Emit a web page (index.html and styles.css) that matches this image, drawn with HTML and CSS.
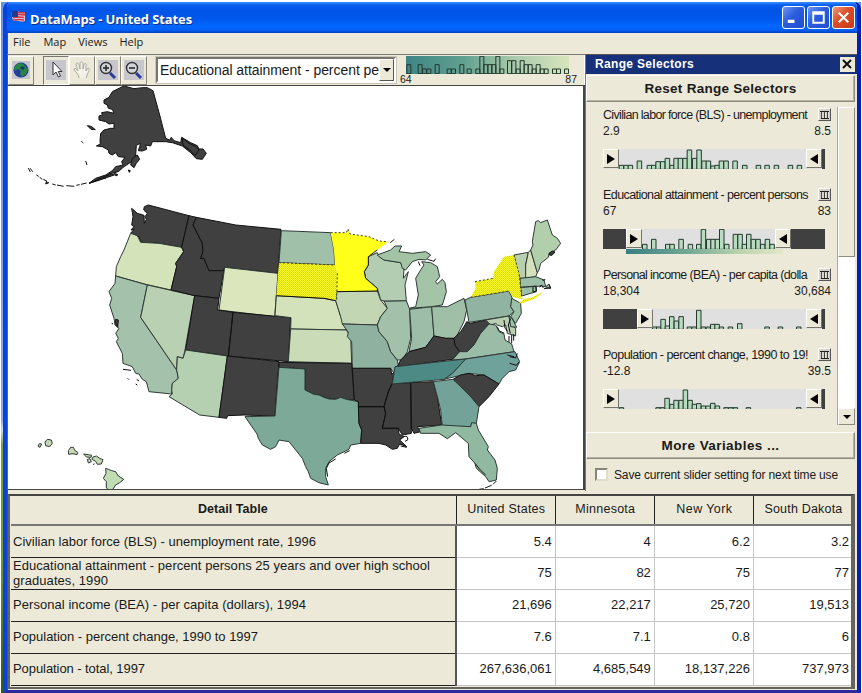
FILE: index.html
```html
<!DOCTYPE html>
<html lang="en">
<head>
<meta charset="utf-8">
<title>DataMaps - United States</title>
<link rel="stylesheet" href="styles.css">
</head>
<body>
<div class="window">
<header class="titlebar">
  <svg class="flag" width="17" height="14" viewBox="0 0 17 14"><path fill="#e9c6cf" d="M1 2q5-2 9 0 3 1 5 0v9q-3 1-6 0t-6 0z"/><path d="M3 3q5-1 12 0M4 5q5-1 11 0M3 7.500q6-1 11 0M3 10q6-1 11 0" fill="none" stroke="#d0364a" stroke-width="1.300"/><path fill="#263a91" d="M1 1h7v6H2z"/></svg>
  <h1><span class="fit" data-w="162">DataMaps - United States</span></h1>
  <div class="controls">
    <b class="min"><svg viewBox="0 0 22 22"><path d="M5 15h7" stroke="#fff" stroke-width="3.500"/></svg></b>
    <b class="max"><svg viewBox="0 0 22 22"><path d="M5.500 5.500h11v11h-11zM5 7h12" fill="none" stroke="#fff" stroke-width="2"/></svg></b>
    <b class="close"><svg viewBox="0 0 22 22"><path d="M6 6l10 10M16 6L6 16" stroke="#fff" stroke-width="2.200"/></svg></b>
  </div>
</header>
<nav class="menu"><span>File</span><span>Map</span><span>Views</span><span>Help</span></nav>
<div class="upper">
  <section class="left">
    <div class="toolbar">
      <button class="tool globe"><svg width="18" height="18" viewBox="0 0 18 18"><path fill="#c4c4cc" d="M0 0h18v18H0z"/><circle cx="9" cy="9" r="7.500" fill="#233d9a"/><path fill="#278642" d="M5 3l5-1 3 3 3 3-2 5-4 3-2-3 1-3-3-2-3 2-1-3z"/><path fill="#173465" d="M10 5l3 2-2 2-3-2z"/></svg></button>
      <button class="tool pressed"><svg width="20" height="20" viewBox="0 0 20 20"><path fill="#c6c6cc" d="M0 0h20v20H0z"/><path d="M7 2v13l3-3 2.500 5 2-1-2.300-4.500H16z" fill="#fff" stroke="#333"/></svg></button>
      <button class="tool"><svg width="20" height="20" viewBox="0 0 20 20"><path d="M7 18c0-4-4-6-5-9 1-2 3 1 4 2L4 4c1-2 2-1 3 1l1 4V3c1-2 2-1 3 0v6l1-5c2-1 3 0 2 2v5l2-3c2 0 1 3 0 5l-2 5" fill="#f3f2e9" stroke="#a9a99e"/></svg></button>
      <button class="tool"><svg width="20" height="20" viewBox="0 0 20 20"><path fill="#c6c6cc" d="M0 0h20v20H0z"/><path d="M12 13l5 5" stroke="#2b3b9b" stroke-width="3"/><circle cx="8" cy="8" r="5.500" fill="#d3d3dc" stroke="#333" stroke-width="1.400"/><path d="M5 8h6M8 5v6" stroke="#222" stroke-width="1.500"/></svg></button>
      <button class="tool"><svg width="20" height="20" viewBox="0 0 20 20"><path fill="#c6c6cc" d="M0 0h20v20H0z"/><path d="M12 13l5 5" stroke="#2b3b9b" stroke-width="3"/><circle cx="8" cy="8" r="5.500" fill="#d3d3dc" stroke="#333" stroke-width="1.400"/><path d="M5 8h6" stroke="#222" stroke-width="1.500"/></svg></button>
      <div class="combo"><span class="fit" data-w="219">Educational attainment - percent pe</span><i class="drop"></i></div>
      <div class="legend">
        <svg class="bars" width="163" height="18" viewBox="0 0 488 54" data-base="52" data-w="12" data-bars="2,27 36,27 49,14 62,14 87,27 123,14 136,14 161,27 183,14 209,14 221,52 233,27 245,27 257,27 269,52 281,14 304,39 317,39 330,14 342,39 354,27 366,27 378,14 390,27 402,14 414,14 439,14 451,14 475,14"></svg>
        <div class="ends"><span>64</span><span>87</span></div>
      </div>
    </div>
    <div class="map">
<svg width="575" height="403" viewBox="9 86 575 403">
<defs><pattern id="dots" width="6" height="6" patternUnits="userSpaceOnUse"><rect width="6" height="6" fill="#f8f81a"/><rect width="3" height="3" fill="#cfcf2e"/><rect x="3" y="3" width="3" height="3" fill="#e4e41e"/></pattern></defs>
<g transform="scale(.33333)">
<path class="x" d="M375 258L405 266 430 263 445 263 462 272 482 345 500 415 512 420 517 412 525 422 545 428 548 412 575 428 595 437 600 447 612 447 622 460 610 478 592 476 575 458 550 438 520 428 500 425 460 425 455 438 440 435 443 448 430 453 418 452 425 430 412 436 410 465 405 480 375 500 358 515 330 522 320 535 300 537 270 550 290 535 320 525 340 512 350 500 372 495 368 485 378 472 358 470 350 458 340 465 330 460 328 450 310 440 292 438 304 432 303 422 305 400 315 390 335 385 345 385 345 370 330 372 320 365 300 360 300 348 310 345 308 338 325 335 345 340 340 328 328 325 325 315 315 310 315 300 330 292 340 275 350 270 360 265Z"/>
<path class="x" d="M400 475L415 465 422 478 412 490 405 503 395 495ZM388 510l6 2-3 5ZM265 377l12 2 12 10-13-1ZM247 424l6 5M260 483l4 12M88 504l6 12M94 505l7 10M112 525l7 4M122 532l8 6M133 538l10 5-3 9 10-4M160 552l10 3M174 555l20 4M202 557l24 2M232 556l10-2M246 553l17-4"/>
<path class="x" d="M270 550l22-8 24-12 22-8 8 3-24 8-22 8ZM345 520l12 4-6 4ZM550 414l20 16 22 10 8 10-12 16-16-16-20-14Z"/>
</g>
<g transform="translate(110 190) scale(.33333)">
<path class="x" d="M68 55L85 70 105 76 106 100 112 88 108 80 115 70 104 60 106 50 118 45 240 77 218 172 150 160 95 157 90 140 65 130 75 118 66 120 75 110 68 105 72 80Z"/>
<path fill="#d5e3ba" d="M65 130L85 137 95 157 150 160 218 172 224 185 200 220 203 230 186 300 110 283 20 258 22 230 35 200 45 180Z"/>
<path fill="#a4c1ab" d="M20 258L115 285 95 382 203 540 208 565 190 580 188 612 120 605 112 575 100 568 90 552 80 550 70 530 42 520 40 490 22 455 28 445 20 430 30 415 18 405 15 385 2 345 8 325 0 305 18 280Z"/>
<path class="x" d="M20 388l8 2-2 22-6-10ZM8 400l4 2M42 538l24 3M56 565l4 4M83 568l7 5M80 582l5 3"/>
<path fill="#b9d0b2" d="M115 285L257 317 228 480 222 505 205 500 203 540 95 382Z"/>
<path class="x" d="M240 77L262 82 252 105 280 160 282 185 275 205 285 205 300 242 345 240 330 325 257 317 186 300 203 230 200 220 224 185 218 172Z"/>
<path class="x" d="M262 82L380 105 516 118 507 250 347 232 343 242 300 242 285 205 275 205 282 185 280 160 252 105Z"/>
<path fill="#dbe6bd" d="M347 232L507 250 497 380 330 360Z"/>
<path class="x" d="M257 317L330 325 326 360 372 367 358 498 230 480ZM372 367L545 383 538 515 358 498Z"/>
<path fill="#b5cfb1" d="M230 480L355 498 330 682 272 675 180 620 190 612 188 600 190 580 208 565 203 540 205 500 222 505Z"/>
<path class="x" d="M355 498L510 515 498 678 405 675 356 677 353 685 330 682Z"/>
</g>
<g transform="translate(270 210) scale(.33333)">
<path fill="#a1c0aa" d="M37 62L185 68 195 120 198 165 30 158Z"/>
<path fill="#d3e2ba" d="M22 257L165 265 200 272 215 320 232 360 65 357 66 323 18 317Z"/>
<path fill="#cadcb7" d="M65 357L232 360 245 380 248 460 58 455Z"/>
<path fill="#c2d6b4" d="M203 245L325 243 335 270 355 295 335 320 325 345 220 342 215 320 200 272Z"/>
<path fill="#8eb1a0" d="M220 342L325 345 330 365 355 395 365 425 385 450 388 465 375 490 365 475 250 475 248 395 235 380 238 367Z"/>
<path class="x" d="M30 457L248 460 256 570 232 568 215 562 200 568 180 567 150 555 135 553 108 540 108 477 30 472Z"/>
<path fill="#7da999" d="M30 472L108 477 108 540 135 553 150 555 165 562 180 567 200 568 215 562 232 568 268 575 270 640 278 660 275 700 245 705 240 718 205 735 180 755 170 775 170 800 178 825 150 818 125 805 118 785 110 770 100 745 80 720 60 695 30 690 20 710 5 718 -20 705 -32 685 -36 672 -72 620 18 618Z"/>
<path class="o" d="M176 800l-4-25 8-16 20-12M226 730l16-8"/>
<path class="x" d="M250 475L365 475 368 492 375 490 370 520 358 545 345 590 268 590 268 575 256 570ZM268 590L345 590 350 610 340 655 388 655 390 672 405 680 392 690 413 710 392 702 385 715 370 718 350 705 330 700 275 700 278 660 270 640ZM370 520L425 518 427 670 400 675 388 655 340 655 350 610 345 590 358 545ZM425 518L493 515 505 560 518 645 445 650 455 665 435 670 427 655Z"/>
<path class="o" d="M404 680q14-5 12 10l-8 4M395 708l18 4"/>
<path fill="#a3c0aa" d="M345 273L412 272 422 298 425 385 415 425 400 450 385 450 365 425 355 395 330 365 325 345 335 320 355 295Z"/>
<path fill="#b3cdb2" d="M298 140L325 128 330 138 345 150 395 158 405 180 403 205 418 185 408 225 412 272 345 273 335 270 325 235 290 205 286 185 298 165Z"/>
<path fill="#a3c3a5" d="M325 135L365 120 378 108 398 108 390 125 430 130 470 125 485 135 470 150 450 148 430 155 410 180 400 175 395 158 345 150 330 140Z"/>
<path class="o" d="M364 98l12-10M475 148l20 6 5-8M448 155l5 12"/>
<path class="n" fill="#ffff19" d="M185 68L232 68 237 57 243 72 300 80 330 93 358 95 325 120 298 140 298 165 286 185 290 205 325 235 325 243 203 245 205 190 198 165 195 120Z"/>
<path class="n" fill="url(#dots)" d="M30 158L198 165 205 190 203 245 200 272 175 265 22 257Z"/>
<path class="dash" d="M30 158L198 165M185 68L232 68 237 57 243 72 300 80 330 93 358 95M205 190L203 272"/>
<path class="o" d="M22 257L165 265 200 272M203 245L325 243 325 235 290 205 286 185 298 165 298 140L325 120"/>
</g>
<g transform="translate(390 210) scale(.33333)">
<path fill="#9dbda8" d="M62 298L128 290 135 378 110 412 60 425 68 385Z"/>
<path fill="#a3c4a7" d="M62 295L80 290 88 255 80 205 95 180 105 165 98 155 125 158 145 170 152 200 140 215 145 222 160 208 168 218 172 245 160 285 128 290Z"/>
<path fill="#a0bfa7" d="M128 290L175 290 225 265 233 300 225 335 205 375 195 385 170 385 135 378Z"/>
<path class="x" d="M25 470L35 450 60 425 110 412 135 378 170 385 195 385 200 410 212 425 190 448 90 462Z"/>
<path class="x" d="M228 345L233 335 245 340 290 330 302 340 290 352 275 370 255 405 235 425 212 425 198 405 195 385 215 365Z"/>
<path fill="#91b4a2" d="M228 270L245 262 360 243 370 265 365 290 375 305 360 318 240 337Z"/>
<path fill="#b9d0b0" d="M375 135L418 127 410 165 412 205 393 205 388 190ZM290 330L360 318 365 345 380 355 380 378 355 370 350 345 340 350 325 345 320 340 305 345Z"/>
<path fill="#d3e2ba" d="M418 127L425 120 445 188 440 200 410 205 410 165Z"/>
<path fill="#b2cfac" d="M425 120L432 105 430 95 440 35 448 32 455 38 475 30 490 75 505 85 515 100 500 120 480 132 478 142 455 160 450 180 445 188Z"/>
<path class="x" d="M480 130l10-7 8 3-9 10-8-1Z"/>
<path fill="#9bbfa7" d="M393 205L440 200 465 210 470 230 480 222 485 235 460 228 395 232ZM395 232L442 228 442 245 398 258ZM368 265L395 280 397 310 380 340 365 320 375 305 365 290ZM360 318L368 322 383 352 365 350Z"/>
<path class="o" d="M432 230v16l10-3-2-14M460 210q8 4 8-3M452 232l5-7 6 9M465 236l20-2-5-10M345 330l3 25 8 8M365 325l-7 20 6 25M325 350l5 12 16 8M360 378v20M368 375v25M374 372v20"/>
<path fill="#9bbca6" d="M190 450L212 425 235 425 255 405 275 370 300 342 320 345 330 365 345 372 348 390 368 402 375 425 230 447Z"/>
<path fill="#6ea29a" d="M230 447L378 425 392 455 380 480 360 485 340 505 330 522 285 495 240 490 165 508 190 490Z"/>
<path class="o" d="M355 435l20 5M362 460l20 6 8-10M362 440l18 4 5-14"/>
<path fill="#4d8a86" d="M18 470L230 447 190 490 165 508 10 522Z"/>
<path class="x" d="M192 508L215 495 240 490 260 497 285 495 330 522 300 560 270 590 245 560Z"/>
<path fill="#73a398" d="M133 515L192 508 215 530 245 560 270 590 262 640 248 640 245 650 160 650 155 600 145 560Z"/>
<path fill="#91b8a0" d="M90 655L158 645 245 650 248 638 262 640 268 660 298 710 295 720 318 750 325 775 322 810 300 815 290 800 262 775 258 760 240 740 238 700 200 668 175 686 150 670 95 670Z"/>
<path class="o" d="M270 838l14-2M288 834l20-8M312 823l10-10M258 760l16 20 16 15"/>
<path class="n" fill="url(#dots)" d="M245 262L260 235 258 215 312 205 315 185 345 140 375 135 390 190 398 262 405 268 372 262 360 243ZM388 280L405 268 430 262 462 245 440 265 400 280Z"/>
<path class="dash" d="M245 262L360 243M258 215L312 205M375 135L390 190 398 262"/>
</g>
<g transform="translate(0 420) scale(.33333)" fill="#c4d9b3">
<path d="M138 66L145 58 157 60 160 70 152 80 140 77ZM117 79l4-8 7 1-5 10ZM208 92l7-10h8l5 10 8 5-2 7-12-3-13 2ZM254 102l14 2 10 2-2 6-14-1ZM265 118l8-2 4 9-9 4ZM280 112l12-4 10 7 10 4-5 13-12 1-5-9-11-6ZM282 134l5-3"/>
<path fill="#bfdcb2" d="M320 145L328 148 338 152 350 155 358 168 374 178 362 188 350 195 340 210 332 212 322 204 322 185 313 175 321 160Z"/>
</g>
</svg>
    </div>
  </section>
  <aside class="panel">
    <div class="phead"><span class="fit" data-w="99">Range Selectors</span><b><svg width="14" height="14" viewBox="0 0 14 14"><path d="M3 3l8 8M11 3l-8 8" stroke="#111" stroke-width="2"/></svg></b></div>
    <button class="wide"><span class="fit" data-w="152">Reset Range Selectors</span></button>
    <div class="list">
      <div class="items">
        <div class="item"><div class="name"><span class="fit" data-w="204">Civilian labor force (BLS) - unemployment</span><i class="trash"></i></div><div class="vals"><span>2.9</span><span>8.5</span></div>
          <div class="slider"><svg class="bars" viewBox="0 0 665 60" data-base="60" data-w="13.5" data-bars="48,12 62,12 75,12 102,25 132,12 145,12 158,23 172,23 186,33 200,12 212,33 225,33 239,33 252,58 268,33 281,58 296,25 309,25 323,10 335,12 348,25 362,25 389,25 418,12 459,12 485,12 513,12 555,12 582,12"></svg><i class="off w0"></i><i class="handle r"></i><i class="gap"></i><i class="handle l"></i><i class="off w3"></i></div></div>
        <div class="item"><div class="name"><span class="fit" data-w="205">Educational attainment - percent persons</span><i class="trash"></i></div><div class="vals"><span>67</span><span>83</span></div>
          <div class="slider"><svg class="bars" viewBox="0 0 665 60" data-base="60" data-w="13.5" data-bars="118,15 145,30 187,15 200,15 227,30 255,15 280,15 294,60 310,30 323,30 336,30 349,60 364,15 390,45 404,45 417,15 430,45 444,30 458,30 472,15 486,30 500,15"></svg><i class="off w23"></i><i class="handle r"></i><i class="gap"></i><i class="handle l"></i><i class="off w34"></i><i class="ramp"></i></div></div>
        <div class="item"><div class="name"><span class="fit" data-w="204">Personal income (BEA) - per capita (dolla</span><i class="trash"></i></div><div class="vals"><span>18,304</span><span>30,684</span></div>
          <div class="slider"><svg class="bars" viewBox="0 0 665 60" data-base="60" data-w="13.5" data-bars="148,7 160,7 173,30 186,10 199,38 213,25 227,38 252,7 266,7 280,57 294,7 309,7 322,15 335,15 348,7 375,7 403,17 485,7 525,7 580,7"></svg><i class="off w34"></i><i class="handle r"></i><i class="gap"></i><i class="handle l"></i><i class="off w3"></i></div></div>
        <div class="item"><div class="name"><span class="fit" data-w="205">Population - percent change, 1990 to 19!</span><i class="trash"></i></div><div class="vals"><span>-12.8</span><span>39.5</span></div>
          <div class="slider"><svg class="bars" viewBox="0 0 665 60" data-base="60" data-w="13.5" data-bars="48,5 158,5 171,5 185,33 200,15 212,27 227,27 240,58 254,27 267,15 280,17 294,10 308,10 322,18 336,10 362,5 376,5 390,5 429,5 580,5"></svg><i class="off w0"></i><i class="handle r"></i><i class="gap"></i><i class="handle l"></i><i class="off w3"></i></div></div>
      </div>
      <div class="scroll"><i class="thumb"></i><i class="down"></i></div>
    </div>
    <button class="wide more"><span class="fit" data-w="118">More Variables ...</span></button>
    <label class="save"><i></i><span class="fit" data-w="224">Save current slider setting for next time use</span></label>
  </aside>
</div>
<div class="tablebox">
<table>
<colgroup><col class="c0"><col class="c1"><col class="c1"><col class="c1"><col class="c1"></colgroup>
<tr><th><b><span class="fit" data-w="70">Detail Table</span></b></th><th><span class="fit" data-w="78">United States</span></th><th><span class="fit" data-w="60">Minnesota</span></th><th><span class="fit" data-w="56">New York</span></th><th><span class="fit" data-w="78">South Dakota</span></th></tr>
<tr><th><span class="fit" data-w="303">Civilian labor force (BLS) - unemployment rate, 1996</span></th><td>5.4</td><td>4</td><td>6.2</td><td>3.2</td></tr>
<tr><th><span class="fit" data-w="417">Educational attainment - percent persons 25 years and over high school</span><br><span class="fit" data-w="95">graduates, 1990</span></th><td>75</td><td>82</td><td>75</td><td>77</td></tr>
<tr><th><span class="fit" data-w="293">Personal income (BEA) - per capita (dollars), 1994</span></th><td>21,696</td><td>22,217</td><td>25,720</td><td>19,513</td></tr>
<tr><th><span class="fit" data-w="245">Population - percent change, 1990 to 1997</span></th><td>7.6</td><td>7.1</td><td>0.8</td><td>6</td></tr>
<tr><th><span class="fit" data-w="132">Population - total, 1997</span></th><td>267,636,061</td><td>4,685,549</td><td>18,137,226</td><td>737,973</td></tr>
</table>
</div>
</div>
<script src="app.js"></script>
</body>
</html>
```
FILE: styles.css
```css
*{box-sizing:border-box}
body{margin:0;width:862px;height:693px;overflow:hidden;font:12px "Liberation Sans",Arial,sans-serif;color:#1a1a1a;background:linear-gradient(#6595e8 0,#86aeea 420px,#c6dbe8 430px,#76a33a 445px,#6c9a34 560px,#35581f 693px);border-left:1px solid #fff;border-top:2px solid #fff;border-right:1px solid #fff}
i,b{font-style:normal}
button{font:inherit;padding:0;margin:0;color:inherit;border-radius:0}
.fit{display:inline-block;white-space:nowrap}
.window{margin-left:2px;width:858px;height:691px;background:#ece9d8;border:solid #0b43d8;border-width:0 4px 3px;border-right-color:#0620b4;border-bottom-color:#2c2a9c;border-radius:7px 7px 0 0;overflow:hidden;box-shadow:inset 1px 0 #555}
.titlebar{height:31px;margin:0 -4px;padding:1px 6px 0 5px;display:flex;align-items:center;background:linear-gradient(#3a93ff 0,#0a5df0 3px,#0055e5 9px,#0058ec 17px,#0066ff 24px,#0460f6 28px,#003fbe 31px);color:#fff}
.flag{margin:0 0 3px 2px}
h1{flex:1;margin:2px 0 0 3px;font:bold 13px "Open Sans","DejaVu Sans",sans-serif;text-shadow:1px 1px #10308c}
.controls{display:flex;gap:2px;margin-bottom:1px}
.controls b{width:23px;height:23px;border:1px solid #fff;border-radius:3px;background:linear-gradient(135deg,#6c96f4,#2a5cdd 45%,#1d4fcf);display:block}
.controls svg{display:block}
.controls .close{background:linear-gradient(135deg,#f09a7c,#db4c28 45%,#c53c16)}
.menu{height:21px;padding:2px 0 0 6px;display:flex;gap:13px;font:11px/13px "Open Sans","DejaVu Sans",sans-serif}
.menu span:nth-child(n+3){margin-left:-1px}
.upper{height:437px;display:flex}
.left{width:578px;border-top:1px solid #777}
.toolbar{height:30px;padding-left:1px;display:flex;align-items:center;border-right:1px solid #fff}
.tool{width:26px;height:29px;background:#ece9d8;border:1px solid;border-color:#fff #85837a #85837a #fff;display:grid;place-items:center}
.tool:nth-child(2){margin-left:9px}
.pressed{border-color:#777 #fff #fff #777}
.combo{width:240px;height:26px;margin-left:9px;padding-left:2px;border:2px solid;border-color:#77756d #fff #fff #77756d;background:#fff;display:flex;justify-content:space-between;align-items:center;font-size:14px;box-shadow:0 0 0 1px #c9c6b8}
.drop{width:15px;height:22px;background:#ece9d8;border:1px solid;border-color:#fff #555 #555 #fff;display:grid;place-items:center}
.drop:after,.down:after{content:"";border:4px solid transparent;border-top:4px solid #000;border-bottom:0}
.legend{margin:1px 0 0 10px;width:163px;align-self:start;font-size:10.500px;line-height:10px}
.legend .bars{display:block;background:linear-gradient(90deg,#3f8585,#60a090 35%,#a7c9aa 65%,#d8e5bd)}
.legend .bars rect{fill:none}
.ends{display:flex;justify-content:space-between;margin:0 -8px 0 -6px}
.map{height:405px;background:#fff;border:1px solid #444;border-right-width:2px;border-left-color:#666}
.map svg{display:block}
.map path{stroke:#2e3a35;stroke-width:1;vector-effect:non-scaling-stroke}
.map .x{fill:#404040;stroke:#111}
.map .o,.map .dash{fill:none;stroke:#111}
.map .dash{stroke:#44442a;stroke-dasharray:2 2}
.map .n{stroke:none}
.panel{width:272px;border-top:1px solid #555;border-left:1px solid #777;background:#ece9d8}
.phead{height:19px;padding:0 0 2px 9px;background:#16307a;color:#fff;font-weight:bold;display:flex;justify-content:space-between;align-items:center}
.phead b{width:15px;height:15px;margin-right:2px;margin-top:1px;background:#ece9d8;display:block}
.phead svg{display:block}
.wide{display:block;width:269px;height:27px;margin-top:1px;background:#ece9d8;border:1px solid;border-color:#fff #8e8b80 #8e8b80 #fff;box-shadow:inset -1px -1px #b6b3a5;font-weight:bold;font-size:13.500px}
.list{height:330px;padding:5px 0 7px 17px;display:flex;justify-content:space-between}
.items{width:228px}
.item{height:80px}
.name{height:15px;display:flex;justify-content:space-between;align-items:center;font-size:12.500px}
.trash{width:13px;height:13px;border:1px solid;border-color:#fff #555 #555 #fff;background:linear-gradient(#222,#222) 1px 2px/9px 1px no-repeat,linear-gradient(#222,#222) 2px 9px/8px 1px no-repeat,repeating-linear-gradient(90deg,transparent 0 1px,#444 1px 2px,#ddd 2px 3px) 1px 3px/9px 7px no-repeat,#d3d0c4}
.vals{height:26px;padding-top:2px;display:flex;justify-content:space-between;line-height:14px}
.slider{position:relative;width:222px;height:20px;background:#e0e0e1;display:flex;margin-top:1px}
.slider .bars{position:absolute;left:0;top:0;width:222px;height:20px}
.bars rect{fill:#b8dcc0;stroke:#24382d;stroke-width:1;vector-effect:non-scaling-stroke}
.slider i{position:relative}
.handle{width:16px;height:19px;background:#ece9d8;border:1px solid;border-color:#fff #77746a #77746a #fff;display:grid;place-items:center}
.handle:after{content:"";border:5px solid transparent;border-left:8px solid #000;border-right:0}
.handle.l:after{border:5px solid transparent;border-right:8px solid #000;border-left:0}
.off{background:#404040}
.w0{width:0}.w3{width:3px}.w23{width:23px}.w34{width:34px}
.gap{flex:1}
.slider .ramp{position:absolute;left:23px;top:20px;width:157px;height:5px;background:linear-gradient(90deg,#397f80,#74a996 40%,#b6d1ac 70%,#e4e7c8)}
.scroll{width:18px;margin-right:2px;background:#fff;border-left:1px solid #aaa79b;display:flex;flex-direction:column;justify-content:space-between}
.thumb{height:150px;background:#ece9d8;border:1px solid;border-color:#fff #8e8b80 #8e8b80 #fff}
.down{height:17px;background:#ece9d8;border:1px solid;border-color:#fff #8e8b80 #8e8b80 #fff;display:grid;place-items:center}
.more{margin:0}
.save{display:flex;align-items:center;gap:6px;padding:3px 0 0 9px;height:28px}
.save i{width:13px;height:13px;background:#fff;border:2px solid;border-color:#88857a #e0ddcf #e0ddcf #88857a}
.tablebox{margin:3px 2px 0 1px;height:195px;border:2px solid #66645d;border-top:2px solid #444;border-right-width:4px;background:#ece9d8;padding:0 0 0 1px;overflow:hidden}
table{border-collapse:collapse;table-layout:fixed;width:842px}
.c0{width:445px}.c1{width:99px}
tr{height:32px}
tr:first-child{height:29px}
th,td{padding:0 3px 0 4px;height:32px;font-weight:normal;font-size:13px;line-height:15.500px;overflow:hidden}
tr:first-child th{height:29px;font-size:12.500px;text-align:center;border-right:1px solid #222;border-bottom:2px solid #777}
th{background:#ece9d8;text-align:left;border-bottom:1px solid #222;border-right:2px solid #555}
td{text-align:right;background:#fff;border:1px solid #c5c5c5}
tr th:first-child{padding-left:2px}
```
FILE: app.js
```js
// Draw the histogram bars from their x,height pairs.
document.querySelectorAll('svg.bars').forEach(function (svg) {
  var base = +svg.dataset.base, w = svg.dataset.w;
  svg.dataset.bars.split(' ').forEach(function (pair) {
    var p = pair.split(',').map(Number);
    var r = document.createElementNS('http://www.w3.org/2000/svg', 'rect');
    r.setAttribute('x', p[0]);
    r.setAttribute('y', base - p[1] + 1);
    r.setAttribute('width', w);
    r.setAttribute('height', p[1]);
    svg.appendChild(r);
  });
});
// Spread label letters over the label's nominal width.
document.querySelectorAll('.fit').forEach(function (el) {
  var n = el.textContent.length;
  el.style.letterSpacing = ((el.dataset.w - el.getBoundingClientRect().width) / n) + 'px';
});
```
